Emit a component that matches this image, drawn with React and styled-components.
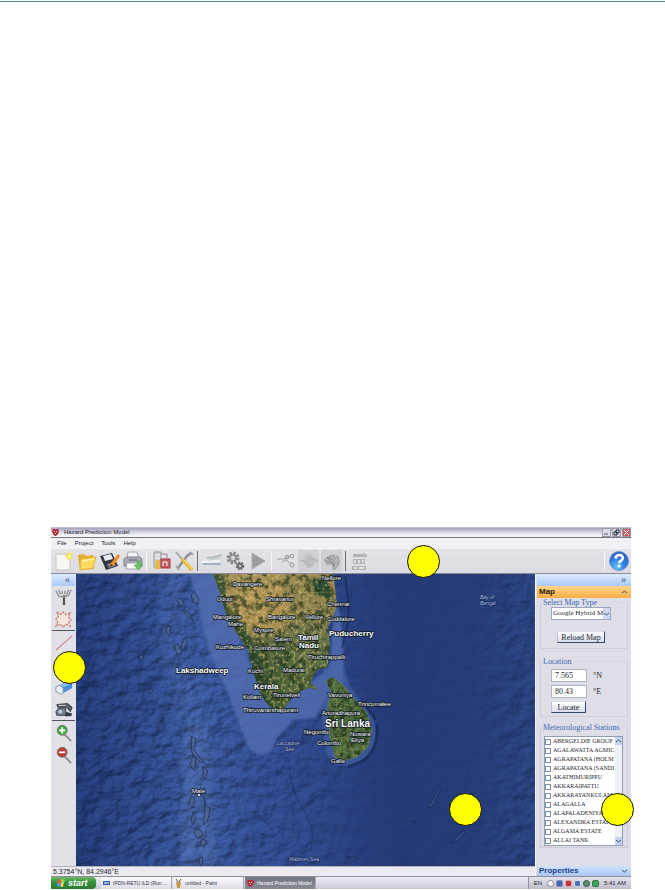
import React from "react";
import styled, { createGlobalStyle, css } from "styled-components";

const Global = createGlobalStyle`
  *, *::before, *::after { box-sizing: border-box; }
  html, body { margin: 0; background: #fff; }
  body { font-family: "Liberation Sans", Arial, sans-serif; font-size: 7px; line-height: 9px; color: #26262e; }
  button, input, select { font: inherit; color: inherit; margin: 0; padding: 0; border: 0; border-radius: 0; }
`;

const Page = styled.main`
  min-height: 100vh;
  display: flex;
  flex-direction: column;
  justify-content: space-between;
  padding: 1px 0;
`;
const TopRule = styled.hr`
  width: 100%;
  height: 1px;
  margin: 0;
  border: 0;
  background: #4f829f;
`;
const Figure = styled.section`
  position: relative;
  margin: 0 34px 0 51px;
  display: flex;
  flex-direction: column;
  background: #dfdee5;
`;
const Marker = styled.span`
  position: absolute;
  width: 33px;
  height: 33px;
  border: 1px solid #111;
  border-radius: 50%;
  background: #ffff00;
  left: ${(p) => p.$left || "auto"};
  right: ${(p) => p.$right || "auto"};
  top: ${(p) => p.$top};
`;

const TitleBar = styled.header`
  display: flex;
  align-items: center;
  gap: 5px;
  height: 11px;
  padding-left: 1px;
  background: linear-gradient(#c9c8da 0%, #a9a8bf 15%, #d6d6e2 50%, #f4f4f8 85%);
  border-bottom: 1px solid #76767f;
`;
const Title = styled.h1`
  flex: 1;
  margin: 0;
  font-size: 6px;
  font-weight: 400;
  line-height: 9px;
`;
const WindowButtons = styled.div`
  display: flex;
  gap: 1px;
`;
const WindowButton = styled.button`
  display: grid;
  place-items: center;
  width: 9px;
  height: 9px;
  border: 1px solid #9a9aab;
  background: ${(p) => (p.$close ? "#cf5660" : "#dcdce6")};
`;
const MenuBar = styled.nav`
  display: flex;
  gap: 8px;
  height: 11px;
  padding: 1px 6px;
  font-size: 6px;
  background: #f1f0f5;
`;
const MenuItem = styled.button`
  background: none;
  line-height: 9px;
`;
const Toolbar = styled.div`
  display: flex;
  align-items: center;
  height: 25px;
  padding: 0 1px;
  border-bottom: 1px solid #8b8b95;
  background: linear-gradient(#e4e3e8, #dcdbe1);
`;
const ToolButton = styled.button`
  display: grid;
  place-items: center;
  width: 23px;
  height: 22px;
  background: ${(p) => (p.$dim ? "#d0d0d4" : "none")};
  background-clip: content-box;
  padding: 0 1px;
  svg { display: block; }
`;
const Divider = styled.span`
  flex: none;
  ${(p) =>
    p.$flat
      ? css`width: 100%; height: 1px; margin: 0 0 1px; background: #55555d;`
      : css`width: 1px; height: 20px; margin: 0 2px; background: ${p.$dark ? "#6e6e74" : "#f7f7f9"};`}
`;
const Spacer = styled.span`
  flex: 1;
`;

const Body = styled.div`
  display: flex;
`;
const Workspace = styled.div`
  flex: 1;
  min-width: 0;
  display: flex;
  flex-direction: column;
`;
const Canvas = styled.div`
  flex: 1;
  min-height: 0;
  display: flex;
`;
const Rail = styled.aside`
  flex: none;
  width: 25px;
  display: flex;
  flex-direction: column;
  align-items: center;
  padding: 0 1px;
  background: #e2e1e7;
`;
const Collapse = styled.button`
  flex: none;
  width: 100%;
  height: 12px;
  padding: 0 5px;
  text-align: right;
  line-height: 11px;
  font-family: "Liberation Sans", Arial, sans-serif;
  font-size: 9px;
  color: #29446f;
  background: linear-gradient(#ddebff, #a9c9f8);
`;
const MapFrame = styled.div`
  position: relative;
  flex: 1;
  min-width: 0;
  background: #24396f;
  svg { position: absolute; inset: 0; width: 100%; height: 100%; display: block; }
`;
const StatusBar = styled.footer`
  height: 10px;
  padding-left: 2px;
  line-height: 10px;
  background: #eceaf0;
  border-top: 1px solid #b3b2bd;
`;

const Panel = styled.aside`
  flex: none;
  width: 96px;
  display: flex;
  flex-direction: column;
  background: #dfdee6;
  border-left: 1px solid #f3f3f7;
  padding-left: 1px;
  font-family: "Liberation Serif", "Times New Roman", serif;
  font-size: 8px;
`;
const PanelHeading = styled.button`
  display: flex;
  align-items: center;
  justify-content: space-between;
  width: 100%;
  height: ${(p) => (p.$blue ? "10px" : "12px")};
  padding: 0 4px 0 2px;
  font-family: "Liberation Sans", Arial, sans-serif;
  font-size: 8px;
  font-weight: 700;
  line-height: 10px;
  color: ${(p) => (p.$blue ? "#1c3c86" : "#251a08")};
  background: ${(p) => (p.$blue ? "linear-gradient(#cfe2fc, #a9c9f5)" : "linear-gradient(#ffd58b, #f7ad46)")};
`;
const PanelGap = styled.div`
  flex: 1;
  min-height: 18px;
`;
const Group = styled.fieldset`
  min-width: 0;
  margin: 0 3px ${(p) => p.$after}px;
  padding: 0 1px ${(p) => p.$pad}px;
  border: 1px solid #cfced8;
  border-top-color: #d8d7e0;
`;
const Legend = styled.legend`
  padding: 0 1px;
  line-height: 9px;
  color: #3b66b5;
  white-space: nowrap;
`;
const Stack = styled.div`
  display: flex;
  flex-direction: column;
  align-items: flex-start;
  gap: ${(p) => p.$gap}px;
  padding-left: 9px;
  padding-top: ${(p) => p.$top || 0}px;
`;
const MapSelectWrap = styled.div`
  display: flex;
  align-items: center;
  width: 60px;
  height: 13px;
  border: 1px solid #9aa9bf;
  background: #fff;
`;
const MapSelect = styled.select`
  appearance: none;
  flex: 1;
  min-width: 0;
  height: 11px;
  padding-left: 1px;
  font-size: 7px;
  background: transparent;
`;
const SelectArrow = styled.span`
  display: grid;
  place-items: center;
  width: 7px;
  height: 11px;
  background: #cdd8ef;
`;
const PushButton = styled.button`
  width: ${(p) => p.$width}px;
  height: 12px;
  margin-left: ${(p) => p.$indent || 0}px;
  line-height: 9px;
  border: 1px solid #35476d;
  border-top-color: #dfe3ee;
  border-left-color: #b9c1d6;
  background: linear-gradient(#fff, #d9dcea);
`;
const Coordinate = styled.label`
  display: flex;
  align-items: center;
  gap: 6px;
`;
const CoordinateInput = styled.input`
  width: 36px;
  height: 13px;
  padding: 0 3px;
  border: 1px solid #abb4c6;
  background: #fff;
`;
const StationBox = styled.div`
  display: flex;
  margin: 4px 3px 0 2px;
  border: 1px solid #8f9db5;
  background: #fff;
`;
const StationList = styled.ul`
  flex: 1;
  min-width: 0;
  margin: 0;
  padding: 0;
  list-style: none;
  overflow: hidden;
`;
const Station = styled.label`
  display: flex;
  align-items: center;
  gap: 2px;
  height: 9px;
  font-size: 6px;
  white-space: nowrap;
`;
const Tick = styled.input`
  appearance: none;
  flex: none;
  width: 6px;
  height: 6px;
  &, &:not(:checked) { border: 1px solid #7890a8; }
  background: #fff;
  &:checked { background: #54708f; }
`;
const ScrollTrack = styled.div`
  display: flex;
  flex-direction: column;
  justify-content: space-between;
  width: 7px;
  background: #eff1f7;
`;
const ScrollButton = styled.button`
  display: grid;
  place-items: center;
  width: 7px;
  height: 8px;
  background: #c6d3ee;
`;

const TaskBar = styled.footer`
  display: flex;
  align-items: stretch;
  height: 13px;
  gap: 1px;
  border-top: 1px solid #8e8d9d;
  background: linear-gradient(#eeedf4, #c8c7d6);
`;
const Start = styled.button`
  display: flex;
  align-items: center;
  gap: 3px;
  width: 45px;
  margin-right: 4px;
  padding-left: 6px;
  border-radius: 0 4px 4px 0;
  font-size: 9px;
  font-style: italic;
  font-weight: 700;
  line-height: 11px;
  color: #fff;
  background: linear-gradient(#72bb69, #35923a 40%, #2a7b30);
`;
const Task = styled.button`
  display: flex;
  align-items: center;
  gap: 3px;
  flex: 0 1 71px;
  min-width: 0;
  padding: 0 2px;
  white-space: nowrap;
  overflow: hidden;
  font-size: 5px;
  color: ${(p) => (p.$active ? "#fff" : "#34343f")};
  border-right: 1px solid #a9a8b7;
  background: ${(p) => (p.$active ? "linear-gradient(#72757f, #878a93)" : "linear-gradient(#fbfbfd, #dddce6)")};
  svg { flex: none; }
`;
const Tray = styled.div`
  display: flex;
  align-items: center;
  gap: 2px;
  padding: 0 2px;
  font-size: 6px;
  background: linear-gradient(#e4e3ec, #bebdcd);
  border-left: 1px solid #9695a6;
`;
const TrayText = styled.span`
  padding: 0 3px;
  white-space: nowrap;
`;
const TrayDot = styled.i`
  width: 7px;
  height: 7px;
  border-radius: ${(p) => (p.$round ? "50%" : "2px")};
  border: 1px solid ${(p) => p.$edge};
  background: ${(p) => p.$fill};
`;

const Svg = ({ size = 20, children }) => (
  <svg width={size} height={size} viewBox="0 0 20 20" aria-hidden="true">
    {children}
  </svg>
);

const PawIcon = () => (
  <svg width="7" height="7" viewBox="0 0 7 7" aria-hidden="true">
    <path d="M1 0h2l.5 1L4 0h2l1 2-1 3-2 2H3L1 5 0 2z" fill="#bb2731" />
    <path d="M2 2h1v1H2zM4 2h1v1H4zM3 4h1v1H3z" fill="#fff" />
  </svg>
);
const NewIcon = () => (
  <Svg>
    <path d="M2 3h10l4 4v12H2z" fill="#f7f7f4" stroke="#c4c4bf" />
    <path d="M15 0l1.3 2.7L19 1.5l-1 3 2 1.5-2.7.8.2 3-2.3-2-2.3 1.7.3-3L10 5l2.800-1L12.500 1.500 14 2.700z" fill="#eee45b" />
    <circle cx="15.500" cy="5" r="1.500" fill="#fffbc2" />
  </Svg>
);
const FolderIcon = () => (
  <Svg>
    <path d="M1 4l6-1 2 2 7-1 1 4v10L3 19z" fill="#e2ad2e" />
    <path d="M4 8l15-2-3 11-13 2z" fill="#fbdc61" stroke="#e5b33c" />
    <path d="M5 10l12-2" stroke="#fff2a8" strokeWidth="1.500" />
  </Svg>
);
const SaveIcon = () => (
  <Svg>
    <path d="M0 5l12-3 6 13-12 4z" fill="#33363f" />
    <path d="M3 5l8-2 2 5-8 2z" fill="#e7eaf0" />
    <path d="M7 13l7-2 2 4-7 2z" fill="#7f838f" />
    <path d="M18 3l2 2-6 9-4 2 1-4z" fill="#f28c1e" />
    <path d="M10 16l1-3 2 1.500z" fill="#442a13" />
  </Svg>
);
const PrintIcon = () => (
  <Svg>
    <path d="M5 1h9l2 7H4z" fill="#eef2f5" stroke="#a2a8b0" />
    <path d="M1 8l3-2h13l2 2v7H1z" fill="#a5a9b2" stroke="#7d828c" />
    <path d="M4 12h11v6H3z" fill="#fafafa" stroke="#a2a8b0" />
    <path d="M6 9h8" stroke="#5d6168" />
    <path d="M14 10h3v4h3l-4.500 5L11 14h3z" fill="#6fc56a" stroke="#49a048" strokeWidth=".6" />
  </Svg>
);
const ExportIcon = () => (
  <Svg>
    <path d="M3 1h7v15H3z" fill="#ced0d2" stroke="#999" />
    <path d="M4 4h5M4 7h5" stroke="#f7f7f7" />
    <path d="M5 9h4v9H4z" fill="#e3ba48" />
    <rect x="10" y="8" width="9" height="9" fill="#c75860" stroke="#a03b45" />
    <path d="M12 15V11h4v4" fill="none" stroke="#fff" />
    <path d="M10 3h6v4" fill="none" stroke="#9d858c" />
  </Svg>
);
const ToolsIcon = () => (
  <Svg>
    <path d="M17 2l-4 3-9 12" stroke="#8d9196" strokeWidth="2.500" fill="none" />
    <path d="M16 1l3 3M2 15l3 4" stroke="#a3a6a9" strokeWidth="2" />
    <path d="M2 1l6 7" stroke="#a8abb0" strokeWidth="2" />
    <path d="M8 8l10 11" stroke="#eab430" strokeWidth="3.500" />
    <path d="M9 8l9 10" stroke="#ffe77e" />
  </Svg>
);
const LayersIcon = () => (
  <Svg>
    <path d="M5 7l8-1 7-2" stroke="#b3bcc3" strokeWidth="2" fill="none" />
    <path d="M0 11l18-1" stroke="#f4f5f7" strokeWidth="2" />
    <path d="M1 13h18" stroke="#a3b2c1" strokeWidth="2" />
    <path d="M7 9l12-2" stroke="#bbc2c8" />
  </Svg>
);
const GearsIcon = () => (
  <Svg>
    <circle cx="8" cy="7" r="4.500" fill="#a0a0a0" stroke="#858585" strokeWidth="4" strokeDasharray="2 1.500" />
    <circle cx="8" cy="7" r="2" fill="#d7d7da" />
    <circle cx="15" cy="15" r="3" fill="#7e7e7e" stroke="#646464" strokeWidth="2.500" strokeDasharray="1.500 1" />
    <circle cx="15" cy="15" r="1" fill="#ddd" />
  </Svg>
);
const PlayIcon = () => (
  <Svg>
    <path d="M4 2l13 8-13 8z" fill="#9c9c9f" stroke="#aeaeb1" />
  </Svg>
);
const CutIcon = () => (
  <Svg>
    <path d="M1 8h7l6-3M6 11l4-2 5 4" fill="none" stroke="#b5b7b8" strokeWidth="1.500" />
    <circle cx="11" cy="6" r="1.800" fill="none" stroke="#969899" />
    <circle cx="16" cy="5" r="1.800" fill="none" stroke="#969899" />
    <circle cx="16" cy="14" r="2" fill="none" stroke="#969899" />
  </Svg>
);
const GhostIcon = () => (
  <Svg>
    <path d="M6 5q5-5 8 0l2 6-4 6H8l-4-6z" fill="#c1c1c4" />
    <path d="M1 9l7 2 4-4 7 3M7 14h6" stroke="#b5b5b8" fill="none" strokeWidth="1.500" />
  </Svg>
);
const LeafIcon = () => (
  <Svg>
    <path d="M2 9q6-8 14-4l2 5-2 6-5 4-1-7-5 1z" fill="#a1a3a4" />
    <path d="M4 8l7 2 1 7M9 5l5 5v6M13 4l3 7" stroke="#c6c7c8" fill="none" />
    <path d="M5 6l6 6 1 4" stroke="#7b7e80" fill="none" />
  </Svg>
);
const ServerIcon = () => (
  <Svg>
    <path d="M3 3h11l2 3H3zM3 8h12v5H3zM2 15h14v4H2z" fill="#b2b2b8" />
    <path d="M5 9v3M9 9v3M13 9v3M4 17h3M9 17h5" stroke="#eee" strokeWidth="1.500" />
    <path d="M13 1l5 4-4 2z" fill="#bbb" />
  </Svg>
);
const HelpIcon = () => (
  <Svg>
    <defs>
      <radialGradient id="helpBall" cx=".4" cy=".8" r=".8">
        <stop offset="0" stopColor="#66c2f8" />
        <stop offset=".55" stopColor="#2f7ce2" />
        <stop offset="1" stopColor="#2457b8" />
      </radialGradient>
    </defs>
    <circle cx="10" cy="10" r="9.500" fill="url(#helpBall)" stroke="#7796cb" />
    <path d="M6.500 7.500Q7 4 10.200 4q3.600 0 3.600 3 0 1.800-2 2.900-1.600.8-1.600 2.300" fill="none" stroke="#fff" strokeWidth="2.600" />
    <rect x="8.800" y="13.700" width="2.800" height="2.600" fill="#fff" />
  </Svg>
);

const AntennaIcon = () => (
  <Svg size={18}>
    <path d="M10 8v11" stroke="#555a5c" strokeWidth="2.500" />
    <path d="M1 3l3 6 5 1 6-2 3-6M4 2l2 5M15 2l-2 5M8 3v4M11 3v4" fill="none" stroke="#8a9092" strokeWidth="1.500" />
  </Svg>
);
const BurstIcon = () => (
  <Svg size={18}>
    <path d="M2 2l4 3 3-3 3 3 5-2-2 5 3 3-3 2 2 5-5-2-3 3-3-3-5 2 2-5-2-3 3-3z" fill="#f6e6dc" stroke="#c47565" strokeWidth="1.200" strokeDasharray="3 1" />
  </Svg>
);
const LineIcon = () => (
  <Svg size={18}>
    <path d="M1 18L19 2" stroke="#d17f83" strokeWidth="1.200" />
  </Svg>
);
const PolygonIcon = () => (
  <Svg size={18}>
    <path d="M3 15L6 4l10 2 1 10z" fill="none" stroke="#b96b6e" />
  </Svg>
);
const EraserIcon = () => (
  <Svg size={18}>
    <path d="M1 10l12-6 6 2v5L7 18l-6-3z" fill="#4b91da" />
    <path d="M1 10l4-2 4 3v6l-2 1-6-3z" fill="#e7eef7" stroke="#8b9bad" />
    <path d="M6 8l8-4 4 2-8 4z" fill="#8cc0f2" />
  </Svg>
);
const BinocularIcon = () => (
  <Svg size={18}>
    <path d="M2 5l12-1 5 4-2 5-4-5H3z" fill="#5d6167" stroke="#34373c" />
    <path d="M4 9h8v8H2l-1-4z" fill="#758394" stroke="#303740" />
    <circle cx="6" cy="13" r="2" fill="#ccd4dd" />
    <path d="M12 13l7 2-1 3H11z" fill="#393e45" />
    <path d="M4 6h8" stroke="#dadfe3" />
  </Svg>
);
const LensIcon = ({ color, plus }) => (
  <Svg size={18}>
    <path d="M10 11l8 8" stroke="#8b8e91" strokeWidth="2.200" />
    <circle cx="8" cy="7" r="5.500" fill={color} stroke="#6d756e" />
    <path d={plus ? "M4.500 7h7M8 3.500v7" : "M4.500 7h7"} stroke="#fff" strokeWidth="2" />
  </Svg>
);
const Chevron = ({ up }) => (
  <svg width="5" height="4" viewBox="0 0 5 4" aria-hidden="true">
    <path d={up ? "M0 3l2.500-2L5 3" : "M0 1l2.500 2L5 1"} fill="none" stroke="#38506f" />
  </svg>
);

const INDIA =
  "M137 0L144 19 148 33 151 43 161 59 172 76 177 96 184 119 192 131 202 139 209 134 219 119 234 114 242 116 234 108 241 96 252 93 252 86 254 69 252 53 258 40 261 33 259 13 257 0Z";
const LANKA =
  "M250 107L257 103 267 111 279 126 291 139 296 156 292 173 281 183 267 187 259 183 254 163 252 143 252 129 256 119 252 112Z";

const PLACES = [
  ["Shravanur", 190, 27], ["Chennai", 251, 32], ["Davangere", 157, 12], ["Nellore", 246, 6],
  ["Udupi", 141, 27], ["Mangalore", 137, 45], ["Bangalore", 192, 45], ["Vellore", 229, 45],
  ["Cuddalore", 251, 47], ["Mahe", 152, 52], ["Mysore", 178, 58], ["Salem", 199, 67],
  ["Kozhikode", 140, 75], ["Coimbatore", 178, 76], ["Tiruchirappalli", 232, 85],
  ["Kochi", 172, 99], ["Madurai", 207, 98], ["Tirunelveli", 197, 123], ["Kollam", 167, 125],
  ["Thiruvananthapuram", 167, 138], ["Vavuniya", 252, 123], ["Trincomalee", 282, 132],
  ["Anuradhapura", 246, 141], ["Negombo", 228, 160], ["Nuwara", 274, 162], ["Eliya", 275, 168],
  ["Colombo", 241, 171], ["Galle", 255, 189], ["Malé", 116, 219],
];
const REGIONS = [
  ["Tamil", 222, 66, 8], ["Nadu", 223, 74, 8], ["Puducherry", 253, 62, 8],
  ["Kerala", 178, 115, 8], ["Lakshadweep", 100, 99, 8], ["Sri Lanka", 249, 153, 10],
];
const SEAS = [
  ["Bay of", 404, 25], ["Bengal", 404, 31], ["Laccadive", 201, 171], ["Sea", 209, 177], ["Maldives Sea", 213, 287],
];
const ATOLLS = [
  "M118 17l-3 4 2 7 5 2 1-5z", "M104 24l-3 3 4 6 3-5z", "M107 36l5 2 5 8-5-3z", "M91 52l4 1-2 9-3-3z",
  "M98 71l4-1 4 8-5 3z", "M108 64l4 4-5 8-2-3z", "M63 80l5 3-4 4z", "M73 114l4 3-4 3z",
  "M115 162l5 3-2 10 5 8 6 6-5-1-8-9z", "M117 181l3 4-2 12-4-6z", "M127 193l5 4-3 9-2-4z",
  "M115 221l4 4-2 9-4-4z", "M128 222l2 10 4 2-2 12-5 5 2-16z", "M117 238l3 6-3 7-2-5z",
  "M119 255l6 1 2 5-6 3-3-5z", "M126 265l5 2-3 6-4-3z", "M124 283l3 1-1 8-3-2z",
];

const SatelliteMap = () => (
  <svg viewBox="0 0 459 292" preserveAspectRatio="xMidYMid slice" role="img" aria-label="Satellite map">
    <defs>
      <linearGradient id="sea" x1="0" x2="1">
        <stop offset="0" stopColor="#1d3370" />
        <stop offset=".15" stopColor="#274286" />
        <stop offset=".27" stopColor="#3a5ba6" />
        <stop offset=".4" stopColor="#2f4a92" />
        <stop offset=".7" stopColor="#233974" />
        <stop offset="1" stopColor="#253d7a" />
      </linearGradient>
      <linearGradient id="land" x1="0" y1="0" x2=".2" y2="1">
        <stop offset="0" stopColor="#a8935c" />
        <stop offset=".35" stopColor="#94844f" />
        <stop offset=".6" stopColor="#6b7549" />
        <stop offset="1" stopColor="#4e6839" />
      </linearGradient>
      <linearGradient id="reliefFade" x1="0" x2="1">
        <stop offset="0" stopColor="#fff" stopOpacity=".3" />
        <stop offset=".25" stopColor="#fff" stopOpacity=".5" />
        <stop offset=".5" stopColor="#fff" stopOpacity=".25" />
        <stop offset=".65" stopColor="#fff" stopOpacity=".05" />
        <stop offset=".85" stopColor="#fff" stopOpacity=".05" />
        <stop offset="1" stopColor="#fff" stopOpacity=".3" />
      </linearGradient>
      <mask id="reliefMask"><rect width="459" height="292" fill="url(#reliefFade)" /></mask>
      <filter id="relief" x="0" y="0" width="1" height="1" colorInterpolationFilters="sRGB">
        <feTurbulence type="fractalNoise" baseFrequency=".07 .09" numOctaves="3" seed="8" />
        <feDiffuseLighting surfaceScale="4" lightingColor="#4a6cb8" diffuseConstant="1">
          <feDistantLight azimuth="225" elevation="50" />
        </feDiffuseLighting>
      </filter>
      <filter id="terrain" x="0" y="0" width="1" height="1" colorInterpolationFilters="sRGB">
        <feTurbulence type="fractalNoise" baseFrequency=".14" numOctaves="4" seed="4" />
        <feColorMatrix values="0 0 0 0 .12  0 0 0 0 .2  0 0 0 0 .1  5 0 0 0 -2.300" />
        <feComposite in2="SourceGraphic" operator="in" />
      </filter>
      <filter id="speckle" x="0" y="0" width="1" height="1" colorInterpolationFilters="sRGB">
        <feTurbulence type="fractalNoise" baseFrequency=".3" numOctaves="2" seed="11" />
        <feColorMatrix values="0 0 0 0 .87  0 0 0 0 .78  0 0 0 0 .5  0 6 0 0 -3.300" />
        <feComposite in2="SourceGraphic" operator="in" />
      </filter>
      <filter id="soft"><feGaussianBlur stdDeviation="3" /></filter>
      <filter id="edge"><feGaussianBlur stdDeviation="1" /></filter>
      <clipPath id="indiaClip"><path d={INDIA} /></clipPath>
    </defs>
    <rect width="459" height="292" fill="url(#sea)" />
    <path d="M85 0h25l-5 60 20 80 15 152H103l7-130L82 70z" fill="#5475bd" opacity=".35" filter="url(#soft)" />
    <path d="M105 292l3-140 24 0 8 140z" fill="#6684c4" opacity=".4" filter="url(#soft)" />
    <rect width="459" height="292" filter="url(#relief)" mask="url(#reliefMask)" />
    <path d="M114 0h26l18 50 23 55 23 32 20-21 30-22 4-60h5q6 40 4 70l-4 22-11-6-12 24-23 2-16 18q-6 18-15 17-15-2-19-21l-14-38-20-45z" fill="#526eb2" opacity=".8" filter="url(#edge)" />
    <path d="M248 95l16-13 10 31 24 32 3 20-7 17-16 10-17-1-11-12-4-33 1-25z" fill="#4a66aa" opacity=".6" filter="url(#edge)" />
    <path d="M269 3l4 28-1 18-6 25" fill="none" stroke="#152656" strokeWidth="2" opacity=".6" />
    <path d="M301 150q2 25-14 37l-15 6M291 133l9 13" fill="none" stroke="#162852" strokeWidth="3" opacity=".7" />
    <g fill="#4c6489" stroke="#172548" strokeWidth=".8" opacity=".75">
      {ATOLLS.map((d) => <path key={d} d={d} />)}
      <path d="M363 215l2 1-9 17-4 1zM376 269l10-11 4-1-7 9zM336 247l4 1-3 1zM271 283l12 1-6 2z" fill="#3a528b" />
    </g>
    <g fill="none" stroke="#142653" strokeWidth="1.200" opacity=".4">
      <path d="M4 200l42-23M3 218q20-14 34-14M2 240l24-22M12 257l32-26M40 270l38-28M4 280l28-20M48 288l25-20M54 157l-3 9M46 145l-5 14" />
      <path d="M213 186q0 28 12 44l12 26-2 22M181 240l12 12" />
    </g>
    <path d={INDIA} fill="url(#land)" />
    <g clipPath="url(#indiaClip)">
      <path d="M136 0l12 0 3 30 20 28 13 23 10 45 10 14-22-10-34-75z" fill="#2b4a2d" opacity=".8" filter="url(#edge)" />
      <path d="M165 3l38 6 12 26-12 27-30-5-17-28z" fill="#c19b58" opacity=".6" filter="url(#soft)" />
      <path d="M235 3l16 4 6 17-18-3z" fill="#294c32" filter="url(#edge)" />
      <path d="M181 74l21-12 16 15-9 31-17 4z" fill="#334f2e" opacity=".5" filter="url(#soft)" />
    </g>
    <path d={INDIA} filter="url(#terrain)" opacity=".65" />
    <path d={INDIA} filter="url(#speckle)" opacity=".5" />
    <path d={LANKA} fill="#4d6a3d" stroke="#71816a" strokeWidth=".6" />
    <path d={LANKA} filter="url(#terrain)" opacity=".7" />
    <path d={LANKA} filter="url(#speckle)" opacity=".25" />
    <g fill="none" stroke="#dbc96a" strokeWidth=".5" opacity=".6">
      <path d="M146 20l22 0 20-11 17-9M150 43l27 4 32-4 20-7 28-4M161 59l27-8 21-8 12 18 25 0 7 2M209 43l-4 20-12 12 5 20-5 28-10-7M205 63l17 13 13 9 14-2M207 98l17-14 16-20M170 76l23-4M198 95l-20 1M207 98l-3 36M175 22l12 20 22 1-10-20 3-22M235 0l-9 20 3 18M159 8l18 17 23 3 24-9 32-1M185 35l6 20M219 35l7 14M219 98l20-6" />
      <path d="M257 108l4 20-2 17 7 19 20-11M261 128l20 6M258 141l21-1 12 14M256 165l14-2 9 19M266 164l-3 20" />
    </g>
    <g fill="#fff" stroke="#111a23" strokeWidth="1.400" paintOrder="stroke" fontFamily="Liberation Sans, Arial, sans-serif">
      {PLACES.map(([name, x, y]) => <text key={name} x={x} y={y} fontSize="6">{name}</text>)}
      {REGIONS.map(([name, x, y, size]) => <text key={name} x={x} y={y} fontSize={size} fontWeight="700">{name}</text>)}
    </g>
    <g fill="#b3c2e5" stroke="#15234c" strokeWidth=".8" paintOrder="stroke" fontSize="5" fontStyle="italic" fontFamily="Liberation Sans, Arial, sans-serif">
      {SEAS.map(([name, x, y]) => <text key={name} x={x} y={y}>{name}</text>)}
    </g>
    <circle cx="123" cy="221" r="1" fill="#fff" />
  </svg>
);

const TOOLS = [
  ["New", NewIcon], ["Open", FolderIcon], ["Save", SaveIcon], ["Print", PrintIcon], null,
  ["Export", ExportIcon], ["Settings", ToolsIcon], "dark",
  ["Layers", LayersIcon], ["Process", GearsIcon], ["Run", PlayIcon], null,
  ["Cut", CutIcon], ["Surface", GhostIcon, true], ["Vegetation", LeafIcon, true], "dark",
  ["Report", ServerIcon],
];
const STATIONS = [
  "ABERGELDIE GROUP", "AGALAWATTA AGMIC", "AGRAPATANA (HOLM", "AGRAPATANA (SANDI", "AKATHIMURIPPU",
  "AKKARAIPATTU", "AKKARAYANKULAM", "ALAGALLA", "ALAPALADENIYA", "ALEXANDRA ESTATE", "ALGAMA ESTATE", "ALLAI TANK",
];

export default function App() {
  return (
    <Page>
      <Global />
      <TopRule />
      <Figure>
        <TitleBar>
          <PawIcon />
          <Title>Hazard Prediction Model</Title>
          <WindowButtons>
            <WindowButton aria-label="Minimize">
              <svg width="7" height="7"><path d="M1 5h4" stroke="#555768" /></svg>
            </WindowButton>
            <WindowButton aria-label="Restore">
              <svg width="7" height="7"><path d="M3 1h3v3H3zM1 3h3v3H1z" fill="none" stroke="#202334" /></svg>
            </WindowButton>
            <WindowButton aria-label="Close" $close>
              <svg width="7" height="7"><path d="M1 1l5 5M6 1L1 6" stroke="#fff" /></svg>
            </WindowButton>
          </WindowButtons>
        </TitleBar>
        <MenuBar>
          {["File", "Project", "Tools", "Help"].map((m) => <MenuItem key={m}>{m}</MenuItem>)}
        </MenuBar>
        <Toolbar>
          {TOOLS.map((tool, i) => {
            if (!Array.isArray(tool)) return <Divider key={i} $dark={tool === "dark"} />;
            const [name, Icon, dim] = tool;
            return <ToolButton key={name} aria-label={name} $dim={dim}><Icon /></ToolButton>;
          })}
          <Spacer />
          <Divider />
          <ToolButton aria-label="Help contents"><HelpIcon /></ToolButton>
        </Toolbar>
        <Body>
          <Workspace>
            <Canvas>
              <Rail>
                <Collapse aria-label="Collapse tools">«</Collapse>
                <ToolButton aria-label="Station"><AntennaIcon /></ToolButton>
                <ToolButton aria-label="Event"><BurstIcon /></ToolButton>
                <Divider $flat />
                <ToolButton aria-label="Line"><LineIcon /></ToolButton>
                <ToolButton aria-label="Polygon"><PolygonIcon /></ToolButton>
                <ToolButton aria-label="Erase"><EraserIcon /></ToolButton>
                <ToolButton aria-label="Find"><BinocularIcon /></ToolButton>
                <Divider $flat />
                <ToolButton aria-label="Zoom in"><LensIcon color="#3faa3c" plus /></ToolButton>
                <ToolButton aria-label="Zoom out"><LensIcon color="#bd3c32" /></ToolButton>
              </Rail>
              <MapFrame><SatelliteMap /></MapFrame>
            </Canvas>
            <StatusBar>5.3754°N, 84.2946°E</StatusBar>
          </Workspace>
          <Panel>
            <Collapse aria-label="Collapse panel">»</Collapse>
            <PanelHeading>Map<Chevron up /></PanelHeading>
            <Group $after={8} $pad={5}>
              <Legend>Select Map Type</Legend>
              <Stack $gap={11}>
                <MapSelectWrap>
                  <MapSelect aria-label="Select Map Type"><option>Google Hybrid M</option></MapSelect>
                  <SelectArrow><Chevron /></SelectArrow>
                </MapSelectWrap>
                <PushButton $width={48} $indent={6}>Reload Map</PushButton>
              </Stack>
            </Group>
            <Group $after={6} $pad={3}>
              <Legend>Location</Legend>
              <Stack $gap={3} $top={3}>
                <Coordinate><CoordinateInput defaultValue="7.565" />°N</Coordinate>
                <Coordinate><CoordinateInput defaultValue="80.43" />°E</Coordinate>
                <PushButton $width={35}>Locate</PushButton>
              </Stack>
            </Group>
            <Group $after={0} $pad={1}>
              <Legend>Meteorological Stations</Legend>
              <StationBox>
                <StationList>
                  {STATIONS.map((s) => (
                    <li key={s}><Station><Tick type="checkbox" />{s}</Station></li>
                  ))}
                </StationList>
                <ScrollTrack>
                  <ScrollButton aria-label="Scroll up"><Chevron up /></ScrollButton>
                  <ScrollButton aria-label="Scroll down"><Chevron /></ScrollButton>
                </ScrollTrack>
              </StationBox>
            </Group>
            <PanelGap />
            <PanelHeading $blue>Properties<Chevron /></PanelHeading>
          </Panel>
        </Body>
        <TaskBar>
          <Start>
            <svg width="8" height="8" viewBox="0 0 8 8" aria-hidden="true">
              <path d="M1 1l3-1v4H0z" fill="#e4583a" /><path d="M4 0l4 1-1 3H4z" fill="#8fd35b" />
              <path d="M0 4h4v4L0 7z" fill="#5f96e8" /><path d="M4 4h3L6 8H4z" fill="#f4cb42" />
            </svg>
            start
          </Start>
          <Task>
            <svg width="7" height="5" viewBox="0 0 7 5"><path d="M0 0h7v4H0z" fill="#345fae" /><path d="M1 2h5" stroke="#fff" /></svg>
            IPDN-RETU ILD (Run ...
          </Task>
          <Task>
            <svg width="7" height="9" viewBox="0 0 7 9"><path d="M1 3h5L5 9H2z" fill="#c59b4f" /><path d="M1 0l2 3M6 0L4 3" stroke="#6c503a" /></svg>
            untitled - Paint
          </Task>
          <Task $active><PawIcon />Hazard Prediction Model</Task>
          <Spacer />
          <Tray>
            <TrayText>EN</TrayText>
            <TrayDot $round $fill="#fff" $edge="#7e8495" />
            <TrayDot $fill="#4865b1" $edge="#8190bd" />
            <TrayDot $fill="#c83039" $edge="#e6a3a4" />
            <TrayDot $fill="#4b6fc0" $edge="#d6dcec" />
            <TrayDot $round $fill="#4e9261" $edge="#3d5149" />
            <TrayDot $fill="#37a750" $edge="#3b744a" />
            <TrayText>5:41 AM</TrayText>
          </Tray>
        </TaskBar>
        <Marker $left="356px" $top="18px" />
        <Marker $left="2px" $top="124px" />
        <Marker $right="149px" $top="266px" />
        <Marker $right="-3px" $top="266px" />
      </Figure>
    </Page>
  );
}
